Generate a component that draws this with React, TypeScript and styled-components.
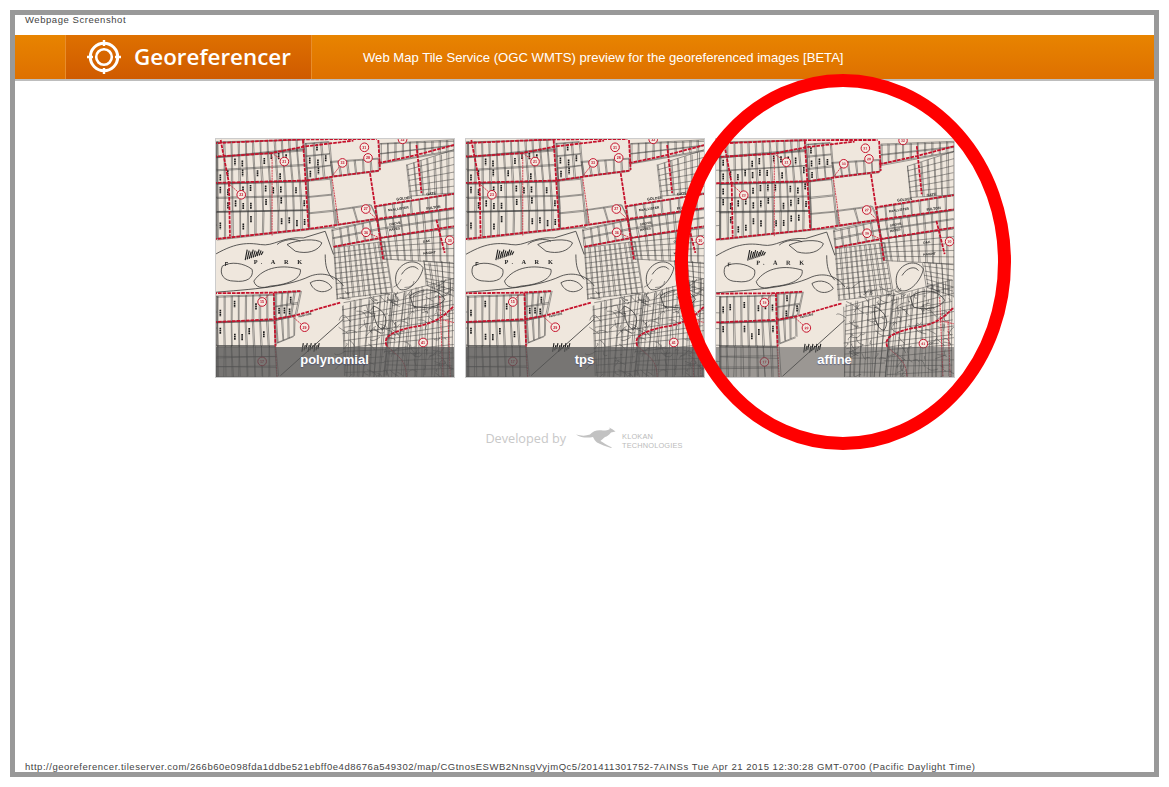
import React, { useMemo } from "react";
import styled, { createGlobalStyle } from "styled-components";

const Global = createGlobalStyle`
  html, body { margin: 0; padding: 0; background: #fff; overflow: hidden; }
  body { font-family: "Liberation Sans", Arial, sans-serif; }
`;

const Page = styled.div`
  position: relative;
  width: 1169px;
  height: 787px;
  padding: 10px;
  box-sizing: border-box;
`;
const Frame = styled.div`
  width: 1149px;
  height: 767px;
  box-sizing: border-box;
  border: 5px solid #999;
  display: flex;
  flex-direction: column;
  background: #fff;
`;
const Caption = styled.div`
  height: 20px;
  padding: 0 0 0 10px;
  font-size: 9.5px;
  line-height: 9px;
  letter-spacing: 0.55px;
  color: #444;
`;
const Header = styled.header`
  height: 44px;
  flex: none;
  display: flex;
  align-items: stretch;
  padding-left: 50px;
  border-bottom: 2px solid #bdbdbd;
  background: linear-gradient(#e88400, #de7000);
`;
const Brand = styled.div`
  width: 247px;
  box-sizing: border-box;
  display: flex;
  align-items: center;
  gap: 12px;
  padding-left: 20px;
  border-left: 1px solid #e88d2c;
  border-right: 1px solid #e88d2c;
  background: linear-gradient(#de7000, #cf5a00);
`;
const BrandName = styled.span`
  font-family: "Open Sans", sans-serif;
  font-weight: 600;
  font-size: 22.4px;
  line-height: 44px;
  color: #fff;
`;
const HeaderTitle = styled.h1`
  margin: 0 0 0 51px;
  align-self: center;
  font-weight: 400;
  font-size: 13.1px;
  color: #fff;
`;
const Main = styled.main`
  flex: 1;
  display: flex;
  flex-direction: column;
  align-items: center;
  padding-top: 57px;
`;
const TileRow = styled.div`
  display: flex;
  gap: 10px;
`;
const Tile = styled.a`
  position: relative;
  display: block;
  width: 240px;
  height: 240px;
  box-sizing: border-box;
  border: 1px solid #ccc;
  overflow: hidden;
  background: #efe7dd;
`;
const MapArt = styled.svg`
  display: block;
  width: 238px;
  height: 238px;
  filter: blur(0.3px);
`;
const TileLabel = styled.div<{ $wash: number }>`
  position: absolute;
  left: 0;
  right: 0;
  bottom: 0;
  height: 30px;
  background: rgba(85, 85, 85, ${(p) => p.$wash});
  color: #fff;
  font-weight: 700;
  font-size: 13px;
  line-height: 25px;
  text-align: center;
  text-shadow: 0 1px 1px rgba(60, 70, 120, 0.6);
`;
const Credit = styled.div`
  display: flex;
  align-items: center;
  margin-top: 49px;
  margin-left: -1px;
  height: 22px;
  color: #c8c8c8;
`;
const CreditText = styled.span`
  font-family: "Open Sans", sans-serif;
  font-size: 12.7px;
  margin-right: 10px;
`;
const Company = styled.span`
  font-size: 7.4px;
  letter-spacing: 0.15px;
  line-height: 9px;
  margin-left: 4px;
  padding-top: 5px;
  color: #bbb;
`;
const Footer = styled.footer`
  padding-left: 10px;
  height: 11px;
  font-size: 9.5px;
  line-height: 11px;
  letter-spacing: 0.52px;
  color: #444;
  white-space: nowrap;
`;
const RedRing = styled.svg`
  position: absolute;
  left: 675px;
  top: 74px;
  width: 336px;
  height: 376px;
  pointer-events: none;
`;

type P = [number, number];

function rng(seed: number) {
  let s = seed;
  return () => {
    s = (s * 16807) % 2147483647;
    return s / 2147483647;
  };
}
const lerp = (a: P, b: P, t: number): P => [a[0] + (b[0] - a[0]) * t, a[1] + (b[1] - a[1]) * t];

// block quad: top-left, top-right, bottom-right, bottom-left; nu columns, nv rows, jitter j, ticks = street names
type Quad = [P, P, P, P, number, number, number, boolean];
const QUADS: Quad[] = [
  [[-26, 36], [18, 35], [18, 328], [-26, 333], 2, 7, 1, false],
  [[-26, 500], [18, 500], [18, 744], [-26, 744], 2, 5, 1, false],
  [[18, 35], [278, 28], [280, 60], [18, 80], 12, 1, 1, false],
  [[18, 80], [280, 55], [290, 152], [18, 160], 12, 2, 1, true],
  [[18, 160], [290, 152], [295, 240], [18, 245], 12, 2, 1, true],
  [[18, 245], [295, 240], [295, 298], [18, 328], 12, 1, 1, true],
  [[285, 40], [355, 35], [365, 140], [290, 150], 3, 3, 1, true],
  [[360, 95], [505, 85], [505, 122], [368, 138], 6, 1, 1, false],
  [[290, 152], [360, 145], [375, 290], [295, 298], 1, 3, 1, false],
  [[375, 240], [480, 225], [500, 265], [380, 285], 2, 1, 1, false],
  [[510, 40], [733, 30], [733, 60], [510, 100], 10, 2, 1, false],
  [[590, 105], [733, 60], [733, 190], [600, 200], 7, 6, 1.5, false],
  [[495, 230], [733, 190], [733, 235], [500, 270], 9, 1, 1, false],
  [[500, 270], [733, 235], [733, 290], [510, 325], 10, 2, 1.5, false],
  [[510, 325], [733, 295], [733, 400], [520, 390], 10, 5, 1.5, false],
  [[365, 300], [500, 270], [510, 325], [370, 350], 6, 2, 1, false],
  [[370, 355], [520, 335], [545, 490], [380, 510], 10, 10, 1.5, false],
  [[18, 500], [190, 495], [190, 572], [18, 578], 8, 1, 1, true],
  [[18, 578], [190, 572], [195, 650], [18, 650], 8, 1, 1, true],
  [[18, 650], [195, 650], [200, 744], [18, 744], 8, 3, 3, false],
  [[195, 490], [270, 485], [255, 555], [195, 570], 4, 2, 1, true],
  [[195, 570], [250, 560], [250, 620], [200, 640], 3, 1, 1, false],
  [[400, 525], [545, 490], [520, 744], [400, 744], 8, 12, 5, false],
  [[545, 500], [733, 450], [733, 744], [520, 744], 12, 15, 7, false],
  [[640, 395], [733, 400], [733, 500], [650, 470], 5, 6, 3, false],
];

const THICK: string[] = [
  "M-20 160L290 152L370 140L510 122",
  "M-20 41L180 32L280 28L500 27",
  "M-20 82L180 70L280 50L430 32",
  "M505 100L620 75L733 45",
  "M55 160L58 320",
  "M30 30L55 160",
  "M278 30L295 298",
  "M-20 332L295 298L500 268L733 235",
  "M492 230L733 192",
  "M370 352L510 325L733 290",
  "M480 130L510 325L520 390",
  "M505 30L510 120",
  "M620 45L635 190",
  "M680 270L705 370",
  "M-20 492L180 490L270 485",
  "M190 490L195 650",
  "M-20 580L190 570L250 560L390 520",
  "M530 650C520 625 540 610 600 595C660 585 690 575 733 530",
];
const THIN: string[] = [
  "M185 80L185 320",
  "M365 140L385 280",
  "M690 500L700 744",
  "M715 570L722 744",
  "M195 650L200 744",
  "M530 650C560 680 590 690 590 744",
  "M180 490L155 518",
  "M222 95L185 70",
  "M58 165L92 195",
  "M397 99L365 140",
  "M467 238L500 268",
  "M468 308L510 325",
  "M690 570L733 580",
  "M250 565L283 594",
];
const CIRCLES: [number, number, string][] = [
  [222, 95, "21"], [463, 52, "31"], [474, 84, "28"], [397, 99, "33"], [92, 195, "23"], [467, 238, "27"], [468, 308, "36"],
  [720, 332, "30"], [155, 518, "15"], [283, 594, "29"], [640, 640, "41"], [155, 697, "17"], [578, 28, "32"],
];
const PARK: string[] = [
  "M-20 395C50 350 90 335 150 345C190 352 215 320 280 325L345 305L370 375",
  "M230 345C260 330 320 325 335 340C325 365 290 375 255 365Z",
  "M35 410C60 395 100 400 125 420C130 445 110 460 70 455C40 455 25 435 35 410Z",
  "M130 455C160 410 220 405 270 420C275 445 240 465 180 470C155 478 135 475 130 455Z",
  "M200 345C215 330 255 325 270 335",
  "M-20 492C100 480 220 478 300 440C340 425 380 440 400 470",
  "M300 460C325 445 355 455 365 475C345 495 310 490 300 460Z",
  "M345 375C345 410 350 430 370 450",
  "M560 430C575 395 620 385 640 415C635 445 600 490 570 480C555 470 555 445 560 430Z",
  "M575 435C590 410 615 405 625 420",
  "M600 500C640 470 690 480 705 510C690 535 640 540 610 530Z",
  "M490 530C520 540 540 570 520 600C500 600 490 565 490 530Z",
  "M210 740L400 570",
];
const ROAD_LABELS: [number, number, number, string, number][] = [
  [42, 410, 0, "F", 17],
  [560, 212, -6, "GOLDEN", 11],
  [650, 197, -8, "GATE", 11],
  [650, 240, -8, "FULTON", 11],
  [535, 245, -8, "McALLISTER", 10],
  [538, 288, -10, "GROVE", 10],
  [538, 305, -10, "HAYES", 10],
  [640, 340, -10, "OAK", 10],
  [640, 375, -5, "HAIGHT", 10],
  [265, 565, -14, "PARKSIDE", 8],
];

function MapDrawing({ seed, transform }: { seed: number; transform: string }) {
  const parts = useMemo(() => {
    const r = rng(seed);
    const streets: string[] = [];
    const ticks: string[] = [];
    const scrub: string[] = [];
    QUADS.forEach(([a, b, c, d, nu, nv, j, hasTicks]) => {
      const jit = () => (r() - 0.5) * j * 2;
      for (let i = 0; i <= nu; i++) {
        const t = i / nu;
        const p = lerp(a, b, t);
        const q = lerp(d, c, t);
        streets.push(`M${p[0] + jit()} ${p[1] + jit()}L${q[0] + jit()} ${q[1] + jit()}`);
        streets.push(`M${p[0] + 3.5 + jit()} ${p[1] + jit()}L${q[0] + 3.5 + jit()} ${q[1] + jit()}`);
        if (hasTicks && i < nu) {
          for (let k = 0; k < nv; k++) {
            if (r() < 0.45) continue;
            const mid = lerp(p, q, (k + 0.3 + r() * 0.4) / nv);
            ticks.push(`M${mid[0] + 11} ${mid[1] - 10}L${mid[0] + 11} ${mid[1] + 10}`);
          }
        }
      }
      for (let i = 0; i <= nv; i++) {
        const t = i / nv;
        const p = lerp(a, d, t);
        const q = lerp(b, c, t);
        streets.push(`M${p[0] + jit()} ${p[1] + jit()}L${q[0] + jit()} ${q[1] + jit()}`);
        if (nv < 5) streets.push(`M${p[0] + jit()} ${p[1] + 3 + jit()}L${q[0] + jit()} ${q[1] + 3 + jit()}`);
      }
    });
    // winding hillside streets in the south-east corner
    for (let i = 0; i < 130; i++) {
      const x = 400 + r() * 333;
      const y = 470 + r() * 274;
      const dx = (r() - 0.5) * 70;
      const dy = (r() - 0.5) * 50;
      scrub.push(`M${x} ${y}Q${x + dx * 0.5 + (r() - 0.5) * 30} ${y + dy * 0.5 + (r() - 0.5) * 30} ${x + dx} ${y + dy}`);
    }
    // lake hatching
    const lake: string[] = [];
    for (let i = 0; i < 9; i++) {
      const x = 104 + i * 6;
      lake.push(`M${x} ${392 - i * 2}L${x + 6} ${360 + (i % 3) * 3}`);
    }
    for (let i = 0; i < 9; i++) {
      const x = 275 + i * 6;
      lake.push(`M${x} ${668 - (i % 3) * 4}L${x + 4} ${642 + (i % 2) * 6}`);
    }
    return { streets: streets.join(""), ticks: ticks.join(""), scrub: scrub.join(""), lake: lake.join("") };
  }, [seed]);

  return (
    <MapArt viewBox="16 27 717 717" aria-hidden="true">
      <rect x="0" y="0" width="760" height="760" fill="#efe7dd" />
      <g transform={transform}>
        <path d={parts.streets} fill="none" stroke="#3a3a3a" strokeWidth="1.7" opacity="0.85" />
        <path d={parts.scrub} fill="none" stroke="#3a3a3a" strokeWidth="1.8" opacity="0.85" />
        <path d={parts.ticks} fill="none" stroke="#1c1c1c" strokeWidth="5" strokeDasharray="5 1.5" />
        <path d={PARK.join("")} fill="none" stroke="#333" strokeWidth="2.4" />
        <path d={parts.lake} fill="none" stroke="#222" strokeWidth="3.4" />
        <path d={THIN.join("")} fill="none" stroke="#cf2a3d" strokeWidth="2.6" strokeDasharray="6 2" />
        <path d={THICK.join("")} fill="none" stroke="#c5122c" strokeWidth="5.4" strokeDasharray="11 3" />
        {CIRCLES.map(([x, y, n]) => (
          <g key={n}>
            <circle cx={x} cy={y} r="13" fill="#f3ebe2" stroke="#c5122c" strokeWidth="3" />
            <text x={x} y={y + 4} textAnchor="middle" fontFamily="Liberation Sans" fontWeight="700" fontSize="11" fill="#c5122c">{n}</text>
          </g>
        ))}
        <text x="130" y="404" fontFamily="Liberation Serif" fontWeight="700" fontSize="19" letterSpacing="11" fill="#222">P. A R K</text>
        {ROAD_LABELS.map(([x, y, a, s, f]) => (
          <text key={s} x={x} y={y} transform={`rotate(${a} ${x} ${y})`} fontFamily="Liberation Sans" fontWeight="700" fontSize={f} fill="#1c1c1c">{s}</text>
        ))}
      </g>
    </MapArt>
  );
}

const TILES = [
  { name: "polynomial", seed: 1234, transform: "", wash: 0.78 },
  { name: "tps", seed: 1234, transform: "translate(2 0)", wash: 0.78 },
  { name: "affine", seed: 987, transform: "matrix(0.987 0.004 0 1 9 1)", wash: 0.55 },
];

function TargetLogo() {
  return (
    <svg width="36" height="36" viewBox="0 0 36 36" fill="none" stroke="#fff" aria-hidden="true">
      <circle cx="18" cy="18" r="13.7" strokeWidth="3" />
      <circle cx="18" cy="18" r="7.8" strokeWidth="2.6" />
      <path d="M18 1V7M18 29V35M1 18H7M29 18H35" strokeWidth="2.4" />
    </svg>
  );
}

function Kangaroo() {
  return (
    <svg width="42" height="22" viewBox="0 0 42 22" fill="#c2c2c2" aria-hidden="true">
      <path d="M0 7.5C5 9 10 9 14 7.5C17 3.5 22 2.5 27 3.5C30 3.5 32 3 34 2L33 0.5L36 2L39.5 4.5L35 5.5C33 8 31 9.5 29 10C27 12 25 13 24.5 14C27 15.5 31 18 36 20.5L35 21C30 19.5 25 17.5 21 15.5C19 14 18 12 17 10C12 11 5 11 0 7.5Z" />
    </svg>
  );
}

export default function App() {
  return (
    <Page>
      <Global />
      <Frame>
        <Caption>Webpage Screenshot</Caption>
        <Header>
          <Brand>
            <TargetLogo />
            <BrandName>Georeferencer</BrandName>
          </Brand>
          <HeaderTitle>Web Map Tile Service (OGC WMTS) preview for the georeferenced images [BETA]</HeaderTitle>
        </Header>
        <Main>
          <TileRow>
            {TILES.map((t) => (
              <Tile key={t.name}>
                <MapDrawing seed={t.seed} transform={t.transform} />
                <TileLabel $wash={t.wash}>{t.name}</TileLabel>
              </Tile>
            ))}
          </TileRow>
          <Credit>
            <CreditText>Developed by</CreditText>
            <Kangaroo />
            <Company>
              KLOKAN
              <br />
              TECHNOLOGIES
            </Company>
          </Credit>
        </Main>
        <Footer>
          http://georeferencer.tileserver.com/266b60e098fda1ddbe521ebff0e4d8676a549302/map/CGtnosESWB2NnsgVyjmQc5/201411301752-7AINSs Tue Apr 21 2015 12:30:28 GMT-0700 (Pacific Daylight Time)
        </Footer>
      </Frame>
      <RedRing viewBox="0 0 336 376" aria-hidden="true">
        <ellipse cx="168" cy="188" rx="161.5" ry="181.5" fill="none" stroke="#ff0000" strokeWidth="13" />
      </RedRing>
    </Page>
  );
}
